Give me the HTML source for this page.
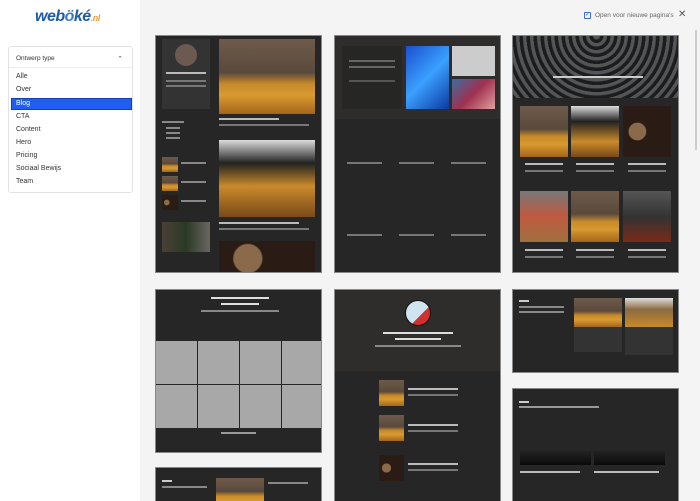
<!DOCTYPE html><html style="overflow:hidden;width:700px;height:501px"><head><style>
*{margin:0;padding:0;box-sizing:border-box}
body{width:700px;height:501px;overflow:hidden;background:#f4f4f4;font-family:"Liberation Sans",sans-serif;position:relative}
.a{position:absolute}
.side{left:0;top:0;width:140px;height:501px;background:#fff}
.dd{left:8px;top:46px;width:125px;height:147px;border:1px solid #e2e2e2;border-radius:3px;background:#fff}
.it{position:absolute;left:7px;font-size:7px;color:#333}
.card{position:absolute;background:#262626;border:1px solid #888;overflow:hidden}
.beer{background:linear-gradient(180deg,#6e5a4a 0%,#5a4a3c 45%,#c98a2a 60%,#d89a30 75%,#a5651a 100%)}
.barrel{background:radial-gradient(circle at 30% 50%,#8a6a4a 0 20%,#2a1c14 22%),linear-gradient(#4a3424,#2a1a10)}
.t{position:absolute;height:2px;background:#bbb}
.g{background:#a8a8a8;position:absolute}
</style></head><body>
<div class="a side"></div>
<div class="a" style="left:35px;top:8px;font-size:16px;font-weight:bold;font-style:italic;color:#1d5aa8;letter-spacing:-0.5px">web<span style="color:#3a7bc8">ö</span>ké<span style="font-size:9px;color:#e8a23a">.nl</span></div>
<div class="a dd">
<div class="it" style="top:8px;font-size:6.5px">Ontwerp type</div>
<div class="a" style="right:9px;top:8px;font-size:7px;color:#555">⌃</div>
<div class="a" style="left:0;right:0;top:20px;border-top:1px solid #eee"></div>
<div class="it" style="top:26px">Alle</div>
<div class="it" style="top:39px">Over</div>
<div class="a" style="left:2px;top:51px;width:121px;height:12px;background:#1f5ef0;border:1px solid #1440b0"></div>
<div class="it" style="top:53px;color:#fff">Blog</div>
<div class="it" style="top:66px">CTA</div>
<div class="it" style="top:79px">Content</div>
<div class="it" style="top:92px">Hero</div>
<div class="it" style="top:105px">Pricing</div>
<div class="it" style="top:118px">Sociaal Bewijs</div>
<div class="it" style="top:131px">Team</div>
</div>
<div class="a" style="left:584px;top:12px;width:7px;height:7px;border:1px solid #3a6fd8;border-radius:1px;font-size:6px;line-height:5px;color:#3a6fd8;text-align:center">✓</div>
<div class="a" style="left:595px;top:12px;font-size:6.5px;color:#666">Open voor nieuwe pagina's</div>
<div class="a" style="left:678px;top:9px;font-size:10px;color:#555">✕</div>
<div class="a" style="left:695px;top:30px;width:2px;height:120px;background:#ccc"></div>

<div class="card" style="left:155px;top:35px;width:167px;height:238px">
<div class="a" style="left:6px;top:3px;width:48px;height:70px;background:#333"></div>
<div class="a" style="left:19px;top:8px;width:22px;height:22px;border-radius:50%;background:#6a5a50"></div>
<div class="t" style="left:10px;top:36px;width:40px"></div><div class="t" style="left:10px;top:44px;width:40px;background:#777"></div><div class="t" style="left:10px;top:49px;width:40px;background:#777"></div>
<div class="t" style="left:6px;top:85px;width:22px;background:#888"></div><div class="t" style="left:10px;top:91px;width:14px;background:#888"></div><div class="t" style="left:10px;top:96px;width:14px;background:#888"></div><div class="t" style="left:10px;top:101px;width:14px;background:#888"></div>
<div class="a beer" style="left:63px;top:3px;width:96px;height:75px"></div>
<div class="t" style="left:63px;top:82px;width:60px"></div><div class="t" style="left:63px;top:88px;width:90px;background:#777"></div>
<div class="a beer" style="left:63px;top:104px;width:96px;height:77px;background:linear-gradient(180deg,#ddd 0%,#222 30%,#c98a2a 60%,#7a4a1a 100%)"></div>
<div class="t" style="left:63px;top:186px;width:80px"></div><div class="t" style="left:63px;top:192px;width:90px;background:#777"></div>
<div class="a barrel" style="left:63px;top:205px;width:96px;height:35px"></div>
<div class="a beer" style="left:6px;top:121px;width:16px;height:15px"></div><div class="a beer" style="left:6px;top:140px;width:16px;height:15px"></div><div class="a barrel" style="left:6px;top:159px;width:16px;height:15px"></div>
<div class="t" style="left:25px;top:126px;width:25px;background:#888"></div><div class="t" style="left:25px;top:145px;width:25px;background:#888"></div><div class="t" style="left:25px;top:164px;width:25px;background:#888"></div>
<div class="a" style="left:6px;top:186px;width:48px;height:30px;background:linear-gradient(90deg,#4a4038,#2a3a24,#6a6662)"></div>
</div>
<div class="card" style="left:334px;top:35px;width:167px;height:238px">
<div class="a" style="left:0;top:0;width:167px;height:83px;background:#2e2d2b"></div>
<div class="a" style="left:7px;top:10px;width:60px;height:63px;background:#262624"></div>
<div class="t" style="left:14px;top:24px;width:46px;background:#666"></div><div class="t" style="left:14px;top:30px;width:46px;background:#666"></div><div class="t" style="left:14px;top:44px;width:46px;background:#555"></div>
<div class="a" style="left:71px;top:10px;width:43px;height:63px;background:linear-gradient(135deg,#1a4fd0,#3aa0ff,#0a3aa0)"></div>
<div class="a" style="left:117px;top:10px;width:43px;height:30px;background:#ccc"></div>
<div class="a" style="left:117px;top:43px;width:43px;height:30px;background:linear-gradient(135deg,#3a6ea0,#a03050,#e0a0a0)"></div>
<div class="t" style="left:12px;top:126px;width:35px;background:#777"></div><div class="t" style="left:64px;top:126px;width:35px;background:#777"></div><div class="t" style="left:116px;top:126px;width:35px;background:#777"></div>
<div class="t" style="left:12px;top:198px;width:35px;background:#777"></div><div class="t" style="left:64px;top:198px;width:35px;background:#777"></div><div class="t" style="left:116px;top:198px;width:35px;background:#777"></div>
</div>
<div class="card" style="left:512px;top:35px;width:167px;height:238px">
<div class="a" style="left:0;top:0;width:167px;height:62px;background:repeating-radial-gradient(circle at 50% 0,#555 0 3px,#1a1c20 4px 7px)"></div>
<div class="t" style="left:40px;top:40px;width:90px;background:#ccc"></div>
<div class="a beer" style="left:7px;top:70px;width:48px;height:51px"></div><div class="a beer" style="left:58px;top:70px;width:48px;height:51px;background:linear-gradient(#ddd,#222 30%,#c98a2a 70%,#7a4a1a)"></div><div class="a barrel" style="left:110px;top:70px;width:48px;height:51px"></div>
<div class="t" style="left:12px;top:127px;width:38px"></div><div class="t" style="left:63px;top:127px;width:38px"></div><div class="t" style="left:115px;top:127px;width:38px"></div>
<div class="t" style="left:12px;top:134px;width:38px;background:#777"></div><div class="t" style="left:63px;top:134px;width:38px;background:#777"></div><div class="t" style="left:115px;top:134px;width:38px;background:#777"></div>
<div class="a beer" style="left:7px;top:155px;width:48px;height:51px;background:linear-gradient(#777,#c05a40 50%,#a07040)"></div><div class="a beer" style="left:58px;top:155px;width:48px;height:51px"></div><div class="a" style="left:110px;top:155px;width:48px;height:51px;background:linear-gradient(#555,#333 50%,#7a2a1a)"></div>
<div class="t" style="left:12px;top:213px;width:38px"></div><div class="t" style="left:63px;top:213px;width:38px"></div><div class="t" style="left:115px;top:213px;width:38px"></div>
<div class="t" style="left:12px;top:220px;width:38px;background:#777"></div><div class="t" style="left:63px;top:220px;width:38px;background:#777"></div><div class="t" style="left:115px;top:220px;width:38px;background:#777"></div>
</div>
<div class="card" style="left:155px;top:289px;width:167px;height:164px">
<div class="t" style="left:55px;top:7px;width:58px;background:#ddd"></div><div class="t" style="left:65px;top:13px;width:38px;background:#ddd"></div>
<div class="t" style="left:45px;top:20px;width:78px;background:#888"></div>
<div class="g" style="left:0;top:51px;width:41px;height:43px"></div><div class="g" style="left:42px;top:51px;width:41px;height:43px"></div><div class="g" style="left:84px;top:51px;width:41px;height:43px"></div><div class="g" style="left:126px;top:51px;width:41px;height:43px"></div>
<div class="g" style="left:0;top:95px;width:41px;height:43px"></div><div class="g" style="left:42px;top:95px;width:41px;height:43px"></div><div class="g" style="left:84px;top:95px;width:41px;height:43px"></div><div class="g" style="left:126px;top:95px;width:41px;height:43px"></div>
<div class="t" style="left:65px;top:142px;width:35px;background:#999"></div>
</div>
<div class="card" style="left:155px;top:467px;width:167px;height:40px">
<div class="t" style="left:6px;top:12px;width:10px;background:#ccc"></div><div class="t" style="left:6px;top:18px;width:45px;background:#888"></div>
<div class="a beer" style="left:60px;top:10px;width:48px;height:30px"></div>
<div class="t" style="left:112px;top:14px;width:40px;background:#888"></div>
</div>
<div class="card" style="left:334px;top:289px;width:167px;height:220px">
<div class="a" style="left:0;top:0;width:167px;height:81px;background:#2e2d2b"></div>
<div class="a" style="left:70px;top:10px;width:26px;height:26px;border-radius:50%;background:linear-gradient(135deg,#cfe4ef 60%,#d03030 60%);border:1px solid #111"></div>
<div class="t" style="left:48px;top:42px;width:70px;background:#ddd"></div><div class="t" style="left:60px;top:48px;width:46px;background:#ddd"></div><div class="t" style="left:40px;top:55px;width:86px;background:#888"></div>
<div class="a beer" style="left:44px;top:90px;width:25px;height:26px"></div><div class="a beer" style="left:44px;top:125px;width:25px;height:26px"></div><div class="a barrel" style="left:44px;top:165px;width:25px;height:26px"></div>
<div class="t" style="left:73px;top:98px;width:50px"></div><div class="t" style="left:73px;top:104px;width:50px;background:#777"></div>
<div class="t" style="left:73px;top:134px;width:50px"></div><div class="t" style="left:73px;top:140px;width:50px;background:#777"></div>
<div class="t" style="left:73px;top:173px;width:50px"></div><div class="t" style="left:73px;top:179px;width:50px;background:#777"></div>
</div>
<div class="card" style="left:512px;top:289px;width:167px;height:84px">
<div class="t" style="left:6px;top:10px;width:10px;background:#ccc"></div><div class="t" style="left:6px;top:16px;width:45px;background:#888"></div><div class="t" style="left:6px;top:21px;width:45px;background:#888"></div>
<div class="a beer" style="left:61px;top:8px;width:48px;height:29px"></div><div class="a beer" style="left:112px;top:8px;width:48px;height:29px;background:linear-gradient(#ddd,#8a6a40 40%,#c98a2a)"></div>
<div class="a" style="left:61px;top:37px;width:48px;height:25px;background:#333"></div><div class="a" style="left:112px;top:37px;width:48px;height:28px;background:#333"></div>
</div>
<div class="card" style="left:512px;top:388px;width:167px;height:120px">
<div class="t" style="left:6px;top:12px;width:10px;background:#ccc"></div>
<div class="t" style="left:6px;top:17px;width:80px;background:#999"></div>
<div class="a" style="left:7px;top:62px;width:71px;height:14px;background:linear-gradient(#222,#0a0a0a)"></div><div class="a" style="left:81px;top:62px;width:71px;height:14px;background:linear-gradient(#222,#0a0a0a)"></div>
<div class="t" style="left:7px;top:82px;width:60px"></div><div class="t" style="left:81px;top:82px;width:65px"></div>
</div>
</body></html>
